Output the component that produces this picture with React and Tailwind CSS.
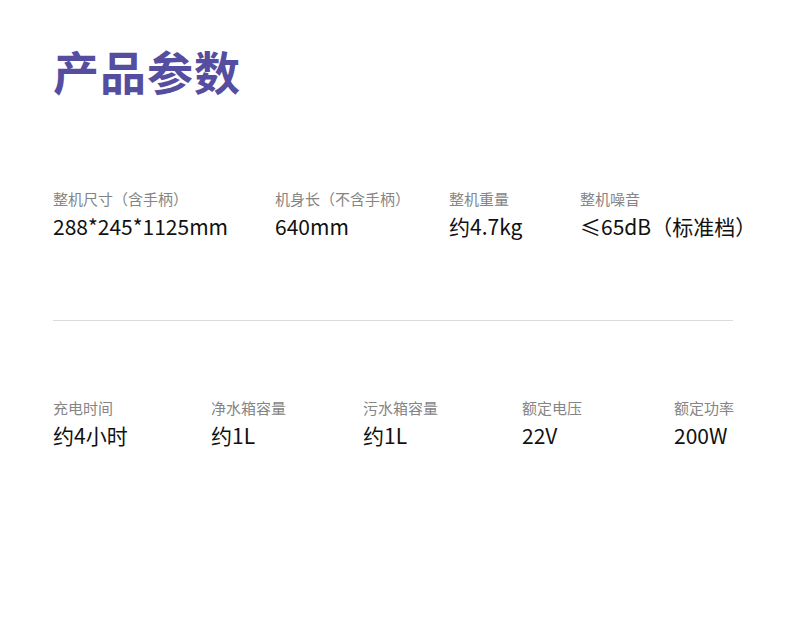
export default function App() {
  const row1 = [
    { w: "w-[222px]", label: "整机尺寸（含手柄）", value: "288*245*1125mm" },
    { w: "w-[174px]", label: "机身长（不含手柄）", value: "640mm" },
    { w: "w-[131px]", label: "整机重量", value: "约4.7kg" },
    { w: "w-[180px]", label: "整机噪音", value: "≤65dB（标准档）" },
  ];
  const row2 = [
    { w: "w-[158px]", label: "充电时间", value: "约4小时" },
    { w: "w-[152px]", label: "净水箱容量", value: "约1L" },
    { w: "w-[159px]", label: "污水箱容量", value: "约1L" },
    { w: "w-[152px]", label: "额定电压", value: "22V" },
    { w: "w-[100px]", label: "额定功率", value: "200W" },
  ];
  const font = { fontFamily: '"Noto Sans CJK SC", "Noto Sans", sans-serif' };
  const Item = ({ it }) => (
    <div className={`${it.w} shrink-0 flex flex-col`}>
      <div className="text-[15px] leading-[20px] text-[#858585] whitespace-nowrap">{it.label}</div>
      <div className="mt-[4px] text-[21px] leading-[26px] font-normal text-[#111111] whitespace-nowrap">{it.value}</div>
    </div>
  );
  return (
    <div className="w-[790px] h-[629px] bg-white overflow-hidden" style={font}>
      <div className="pl-[53px] pt-[38px]">
        <div className="text-[46px] leading-[64px] font-bold text-[#554ea0] tracking-[1px]">产品参数</div>
        <div className="mt-[87px] flex">
          {row1.map((it) => (
            <Item key={it.label} it={it} />
          ))}
        </div>
      </div>
      <div className="mt-[81px] ml-[53px] w-[680px] h-[1px] bg-[#dcdcdc]" />
      <div className="pl-[53px] mt-[77px] flex">
        {row2.map((it) => (
          <Item key={it.label} it={it} />
        ))}
      </div>
    </div>
  );
}
